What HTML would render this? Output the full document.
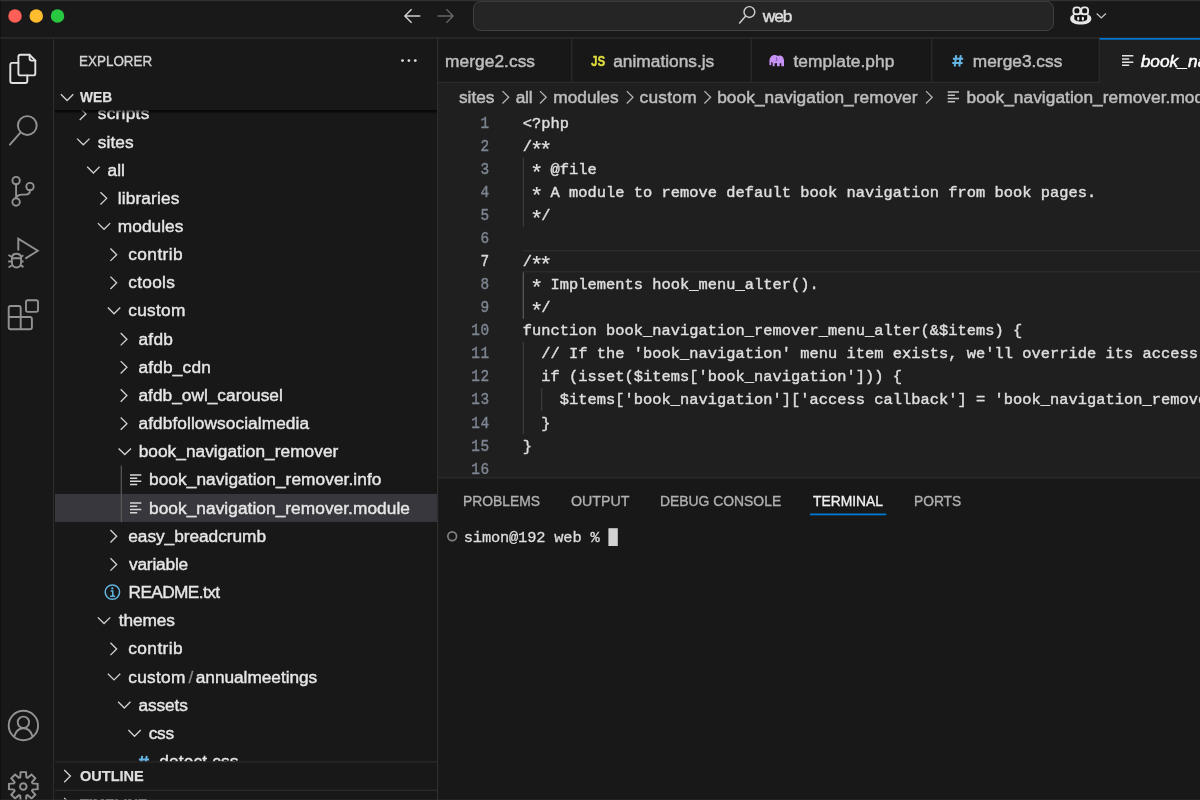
<!DOCTYPE html>
<html lang="en">
<head>
<meta charset="utf-8">
<title>book_navigation_remover.module — web</title>
<style>
*{box-sizing:border-box;margin:0;padding:0}
html,body{width:1200px;height:800px;overflow:hidden;background:#181818}
body{position:relative;font-family:"Liberation Sans",sans-serif;color:#cccccc;font-size:17px}
.abs{position:absolute}
#root{position:absolute;left:0;top:0;width:1200px;height:800px;will-change:transform;overflow:hidden}
#titlebar{left:0;top:0;width:1200px;height:38px;background:#191919}
#titleline{left:0;top:37.6px;width:1200px;height:1.5px;background:#2c2c2c}
#topedge{left:0;top:0;width:1200px;height:1.2px;background:#313131}
.tl{position:absolute;top:9.1px;width:13.8px;height:13.8px;border-radius:50%}
#cmd{left:472.6px;top:0.8px;width:581px;height:29.9px;border:1.3px solid #414141;border-radius:7.5px;background:#252525}
#cmdtext{font-size:17.3px;line-height:20px;height:20px;color:#dcdcdc;white-space:nowrap;-webkit-text-stroke:0.5px #dcdcdc}
#activity{left:0;top:38px;width:54px;height:762px;background:#181818}
#actline{left:53.4px;top:38px;width:1.1px;height:762px;background:#2b2b2b}
#sidebar-border{left:437px;top:38px;width:1.1px;height:762px;background:#2b2b2b}
#explorer-title{font-size:14.3px;color:#d4d4d4;line-height:18px;height:18px;white-space:nowrap;-webkit-text-stroke:0.35px #d4d4d4}
#treeclip{left:55px;top:83px;width:382px;height:679px;overflow:hidden}
#treeinner{position:absolute;left:-55px;top:-83px;width:437px;height:800px}
.sel{position:absolute;left:55px;width:382px;height:27.9px;background:#37373d}
.lbl{position:absolute;height:20px;line-height:20px;color:#e6e6e6;font-size:17.3px;white-space:nowrap;-webkit-text-stroke:0.42px #e6e6e6}
.lbl.sl{color:#8a8a8a;-webkit-text-stroke:0.3px #8a8a8a}
.hash{position:absolute;font-weight:bold;color:#519aba;font-size:17.5px;line-height:28.16px;height:28.16px}
.hdr{position:absolute;left:55px;width:382px;background:#181818}
.hdrt{position:absolute;font-weight:bold;font-size:15px;line-height:18px;height:18px;color:#dedede;white-space:nowrap;-webkit-text-stroke:0.25px #dedede}
.guide{position:absolute;width:1.1px;background:#3e3e3e}
#tabs{left:438px;top:38px;width:762px;height:44px;background:#181818}
#tabsline{left:438px;top:81.9px;width:661.5px;height:1.1px;background:#2b2b2b}
.tsep{position:absolute;top:38px;width:1.1px;height:44px;background:#2b2b2b}
#acttab{left:1099.5px;top:38px;width:101px;height:45px;background:#1f1f1f}
#acttabline{left:1099.5px;top:38px;width:101px;height:1.7px;background:#0078d4}
.tabt{position:absolute;top:51px;height:20px;line-height:20px;font-size:17.3px;color:#bcbcbc;white-space:nowrap;-webkit-text-stroke:0.5px #bcbcbc}
.tabt.on{color:#ffffff;font-style:italic;-webkit-text-stroke:0.5px #ffffff}
.crumb{position:absolute;top:87px;height:20px;line-height:20px;font-size:17.3px;color:#bdbdbd;white-space:nowrap;-webkit-text-stroke:0.5px #bdbdbd}
#editor{left:438px;top:82px;width:762px;height:396px;background:#1f1f1f}
.ln{position:absolute;left:438px;width:51.7px;text-align:right;font-family:"Liberation Mono",monospace;font-size:16px;letter-spacing:0.65px;line-height:18px;color:#7d8592;height:18px;-webkit-text-stroke:0.4px #7d8592;transform-origin:100% 50%;transform:scaleX(0.9)}
.ln.act{color:#d8d8d8;-webkit-text-stroke:0.4px #d8d8d8}
.cl{position:absolute;left:522.7px;font-family:"Liberation Mono",monospace;font-size:15.36px;letter-spacing:0.033px;line-height:18px;color:#dedede;white-space:pre;height:18px;-webkit-text-stroke:0.45px #dedede}
.a{display:inline-block;transform:translateY(4.5px) scale(1.45);-webkit-text-stroke:0.15px #dedede}
#curline{left:522.5px;top:250.1px;width:678px;height:22.3px;border-top:1.2px solid #2e2e2e;border-bottom:1.2px solid #2e2e2e}
#panel{left:438px;top:478px;width:762px;height:322px;background:#181818}
#panelline{left:438px;top:477.2px;width:762px;height:1.1px;background:#2d2d2d}
.ptab{position:absolute;font-size:14.3px;line-height:18px;height:18px;color:#b0b0b0;white-space:nowrap;-webkit-text-stroke:0.35px #b0b0b0}
.ptab.on{color:#f0f0f0;-webkit-text-stroke:0.35px #f0f0f0}
#term{left:463.8px;top:529px;font-family:"Liberation Mono",monospace;font-size:15.36px;letter-spacing:-0.166px;line-height:18px;height:18px;color:#dedede;white-space:pre;-webkit-text-stroke:0.3px #dedede}
</style>
</head>
<body><div id="root">
<!-- title bar -->
<div id="titlebar" class="abs"></div>
<svg class="abs" style="left:0;top:0" width="1200" height="38" viewBox="0 0 1200 38" fill="none">
  <circle cx="15" cy="15.9" r="6.75" fill="#fe5f57"/><circle cx="36.25" cy="15.9" r="6.75" fill="#febc2e"/><circle cx="57.5" cy="15.9" r="6.75" fill="#28c840"/>
  <path d="M420.3 16H405M411.6 9.3L404.9 16l6.700 6.700" stroke="#d0d0d0" stroke-width="1.45"/>
  <path d="M437.600 16H453M446.400 9.300L453.100 16l-6.700 6.700" stroke="#666666" stroke-width="1.350"/>
</svg>
<div id="cmd" class="abs"></div>
<svg class="abs" style="left:730px;top:0" width="40" height="32" viewBox="730 0 40 32" fill="none">
  <circle cx="749.4" cy="12" r="5.400" stroke="#cfcfcf" stroke-width="1.450"/>
  <path d="M745.700 16L739.200 23.400" stroke="#cfcfcf" stroke-width="1.450"/>
</svg>
<span id="cmdtext" class="abs" style="left:762.84px;top:6px;letter-spacing:-1.077px">web</span>
<svg class="abs" style="left:1066px;top:2px" width="46" height="28" viewBox="1066 2 46 28">
  <rect x="1070.1" y="13" width="21.3" height="11.4" rx="8.5" ry="5.7" fill="#e6e6e6"/>
  <path d="M1074.3 14.500h12.900v4c0 1.800-2.800 3-6.450 3s-6.450-1.200-6.450-3z" fill="#101010"/>
  <rect x="1077.200" y="16.700" width="2.100" height="3.900" rx="1" fill="#e6e6e6"/>
  <rect x="1081.800" y="16.700" width="2.100" height="3.900" rx="1" fill="#e6e6e6"/>
  <rect x="1073.400" y="7.400" width="6.900" height="6.900" rx="2.900" fill="#151515" stroke="#e6e6e6" stroke-width="1.900"/>
  <rect x="1081.200" y="7.400" width="6.900" height="6.900" rx="2.900" fill="#151515" stroke="#e6e6e6" stroke-width="1.900"/>
  <path d="M1096.700 13.500l4.600 4.500l4.600-4.500" fill="none" stroke="#c5c5c5" stroke-width="1.250"/>
</svg>

<!-- activity bar -->
<div id="activity" class="abs"></div>
<svg class="abs" style="left:0;top:38px" width="54" height="762" viewBox="0 38 54 762" fill="none" stroke-linejoin="round" stroke-linecap="round">
  <!-- explorer (active) -->
  <g stroke="#e2e2e2" stroke-width="1.9">
    <path d="M20.4 54.8H29.6L35.3 60.5V73.4a2 2 0 0 1-2 2H20.4a2 2 0 0 1-2-2V56.8a2 2 0 0 1 2-2z"/>
    <path d="M29.6 54.8V58.6a2 2 0 0 0 2 2H35.3"/>
    <path d="M18.4 62.9H12.300a2 2 0 0 0-2 2V81a2 2 0 0 0 2 2H25.300a2 2 0 0 0 2-2V75.400"/>
  </g>
  <!-- search -->
  <g stroke="#929292" stroke-width="1.95">
    <circle cx="27.300" cy="125.500" r="9.400"/>
    <path d="M20.400 132.600L9.900 144.600"/>
  </g>
  <!-- source control -->
  <g stroke="#929292" stroke-width="1.9">
    <circle cx="16.100" cy="180.600" r="3.700"/>
    <circle cx="30" cy="186.600" r="3.700"/>
    <circle cx="16.100" cy="202" r="3.700"/>
    <path d="M16.100 184.300V198.300M30 190.300c0 2.800-1.800 4.300-4.600 4.300h-3.300c-3 0-6 1.500-6 3.700"/>
  </g>
  <!-- debug -->
  <g stroke="#929292" stroke-width="1.9" stroke-linecap="butt" stroke-linejoin="miter">
    <path d="M18.300 250.500V238.700L37.800 250.700L25.300 258.600"/>
    <path d="M11.9 258.3c0-3 1.900-4.500 4.600-4.500s4.600 1.500 4.600 4.500v4c0 3-1.900 5.200-4.600 5.200s-4.600-2.200-4.600-5.200zM12 258.200h9M12 257l-3.600-2M21 257l2.300-1.700M12 261.500H8.200M21 261.500h2.600M12.300 265l-3.700 2.500M20.700 265l2.700 2.300"/>
  </g>
  <!-- extensions -->
  <g stroke="#929292" stroke-width="1.9">
    <rect x="26" y="300.200" width="12" height="11.700" rx="1.800"/>
    <path d="M10.700 306h8a2 2 0 0 1 2 2v9h9.200a2 2 0 0 1 2 2v8.300a2 2 0 0 1-2 2H10.700a2 2 0 0 1-2-2V308a2 2 0 0 1 2-2zM8.700 317h12M20.700 317v12.300"/>
  </g>
  <!-- account -->
  <g stroke="#929292" stroke-width="1.9">
    <circle cx="23.400" cy="725.500" r="14.700"/>
    <circle cx="23.400" cy="722.300" r="5.700"/>
    <path d="M14.200 736.500c1.500-5.200 5-8.200 9.200-8.200s7.700 3 9.200 8.200"/>
  </g>
  <!-- gear -->
  <g stroke="#929292" stroke-width="1.95" transform="translate(23.300,786.500)" stroke-linejoin="miter">
    <circle cx="0" cy="0" r="3.3"/>
    <polygon points="-3.08,-9.20 -2.66,-14.36 2.66,-14.36 3.08,-9.20 4.33,-8.68 8.27,-12.03 12.03,-8.27 8.68,-4.33 9.20,-3.08 14.36,-2.66 14.36,2.66 9.20,3.08 8.68,4.33 12.03,8.27 8.27,12.03 4.33,8.68 3.08,9.20 2.66,14.36 -2.66,14.36 -3.08,9.20 -4.33,8.68 -8.27,12.03 -12.03,8.27 -8.68,4.33 -9.20,3.08 -14.36,2.66 -14.36,-2.66 -9.20,-3.08 -8.68,-4.33 -12.03,-8.27 -8.27,-12.03 -4.33,-8.68"/>
  </g>
</svg>

<!-- sidebar -->
<span id="explorer-title" class="abs" style="left:79.39px;transform-origin:0 50%;transform:scaleX(0.9403);top:52px">EXPLORER</span>
<svg class="abs" style="left:398px;top:52px" width="22" height="18" viewBox="398 52 22 18"><circle cx="402.5" cy="60.6" r="1.4" fill="#dcdcdc"/><circle cx="408.900" cy="60.600" r="1.400" fill="#dcdcdc"/><circle cx="415.300" cy="60.600" r="1.400" fill="#dcdcdc"/></svg>
<div id="treeclip" class="abs"><div id="treeinner">
<span class="lbl" style="left:97.77px;top:103px;letter-spacing:0.264px">scripts</span>
<span class="lbl" style="left:97.77px;top:132px;letter-spacing:0.070px">sites</span>
<span class="lbl" style="left:107.61px;top:160px;letter-spacing:0.002px">all</span>
<span class="lbl" style="left:117.83px;top:188px;letter-spacing:0.122px">libraries</span>
<span class="lbl" style="left:117.83px;top:216px;letter-spacing:0.022px">modules</span>
<span class="lbl" style="left:128.26px;top:244px;letter-spacing:0.421px">contrib</span>
<span class="lbl" style="left:128.26px;top:272px;letter-spacing:0.279px">ctools</span>
<span class="lbl" style="left:128.26px;top:300px;letter-spacing:0.272px">custom</span>
<span class="lbl" style="left:138.51px;top:329px;letter-spacing:0.260px">afdb</span>
<span class="lbl" style="left:138.51px;top:357px;letter-spacing:0.167px">afdb_cdn</span>
<span class="lbl" style="left:138.51px;top:385px;letter-spacing:0.008px">afdb_owl_carousel</span>
<span class="lbl" style="left:138.51px;top:413px;letter-spacing:0.073px">afdbfollowsocialmedia</span>
<span class="lbl" style="left:138.63px;top:441px;letter-spacing:0.037px">book_navigation_remover</span>
<span class="lbl" style="left:149.03px;top:469px;letter-spacing:0.068px">book_navigation_remover.info</span>
<svg class="abs" style="left:0;top:0" width="437" height="800" viewBox="0 0 437 800"><rect x="54.6" y="493.94" width="383" height="28" fill="#37373d"/><rect x="120.7" y="465.6" width="1.2" height="56.6" fill="#5a5a5a"/></svg>
<span class="lbl" style="left:149.03px;top:498px;letter-spacing:0.051px">book_navigation_remover.module</span>
<span class="lbl" style="left:128.26px;top:526px;letter-spacing:-0.037px">easy_breadcrumb</span>
<span class="lbl" style="left:128.96px;top:554px;letter-spacing:-0.182px">variable</span>
<span class="lbl" style="left:128.52px;top:582px;letter-spacing:-0.610px">README.txt</span>
<span class="lbl" style="left:118.74px;top:610px;letter-spacing:-0.126px">themes</span>
<span class="lbl" style="left:128.26px;top:638px;letter-spacing:0.421px">contrib</span>
<span class="lbl" style="left:128.26px;top:667px;letter-spacing:0.272px">custom</span>
<span class="lbl sl" style="left:188.4px;top:667px">/</span>
<span class="lbl" style="left:195.76px;top:667px;letter-spacing:-0.042px">annualmeetings</span>
<span class="lbl" style="left:138.51px;top:695px;letter-spacing:-0.131px">assets</span>
<span class="lbl" style="left:148.76px;top:723px;letter-spacing:-0.305px">css</span>
<span class="lbl" style="left:159.26px;top:751px;letter-spacing:0.161px">detect.css</span>
<svg class="abs" style="left:0;top:0" width="437" height="800" viewBox="0 0 437 800"><path d="M79.70 107.68L85.90 113.88L79.70 120.08" stroke="#d0d0d0" stroke-width="1.35" fill="none"/><path d="M77.10 138.64L83.30 144.84L89.50 138.64" stroke="#d0d0d0" stroke-width="1.35" fill="none"/><path d="M87.20 166.80L93.40 173.00L99.60 166.80" stroke="#d0d0d0" stroke-width="1.35" fill="none"/><path d="M100.45 192.16L106.65 198.36L100.45 204.56" stroke="#d0d0d0" stroke-width="1.35" fill="none"/><path d="M97.85 223.12L104.05 229.32L110.25 223.12" stroke="#d0d0d0" stroke-width="1.35" fill="none"/><path d="M110.45 248.48L116.65 254.68L110.45 260.88" stroke="#d0d0d0" stroke-width="1.35" fill="none"/><path d="M110.45 276.64L116.65 282.84L110.45 289.04" stroke="#d0d0d0" stroke-width="1.35" fill="none"/><path d="M107.85 307.60L114.05 313.80L120.25 307.60" stroke="#d0d0d0" stroke-width="1.35" fill="none"/><path d="M120.70 332.96L126.90 339.16L120.70 345.36" stroke="#d0d0d0" stroke-width="1.35" fill="none"/><path d="M120.70 361.12L126.90 367.32L120.70 373.52" stroke="#d0d0d0" stroke-width="1.35" fill="none"/><path d="M120.70 389.28L126.90 395.48L120.70 401.68" stroke="#d0d0d0" stroke-width="1.35" fill="none"/><path d="M120.70 417.44L126.90 423.64L120.70 429.84" stroke="#d0d0d0" stroke-width="1.35" fill="none"/><path d="M118.60 448.40L124.80 454.60L131.00 448.40" stroke="#d0d0d0" stroke-width="1.35" fill="none"/><path d="M130.00 474.93h11.30M130.00 478.13h7.20M130.00 481.33h11.30M130.00 484.53h7.20" stroke="#d4d7d6" stroke-width="1.50" fill="none"/><path d="M130.00 503.09h11.30M130.00 506.29h7.20M130.00 509.49h11.30M130.00 512.69h7.20" stroke="#d4d7d6" stroke-width="1.50" fill="none"/><path d="M110.45 530.08L116.65 536.28L110.45 542.48" stroke="#d0d0d0" stroke-width="1.35" fill="none"/><path d="M110.45 558.24L116.65 564.44L110.45 570.64" stroke="#d0d0d0" stroke-width="1.35" fill="none"/><circle cx="112.4" cy="592.10" r="7.2" fill="none" stroke="#62b4e0" stroke-width="1.5"/><path d="M110.60000000000001 591.00h2.2v5.2M110.10000000000001 596.30h5" fill="none" stroke="#62b4e0" stroke-width="1.5"/><circle cx="112.30000000000001" cy="588.40" r="1.15" fill="#62b4e0"/><path d="M97.85 617.36L104.05 623.56L110.25 617.36" stroke="#d0d0d0" stroke-width="1.35" fill="none"/><path d="M110.45 642.72L116.65 648.92L110.45 655.12" stroke="#d0d0d0" stroke-width="1.35" fill="none"/><path d="M107.85 673.68L114.05 679.88L120.25 673.68" stroke="#d0d0d0" stroke-width="1.35" fill="none"/><path d="M118.10 701.84L124.30 708.04L130.50 701.84" stroke="#d0d0d0" stroke-width="1.35" fill="none"/><path d="M128.35 730.00L134.55 736.20L140.75 730.00" stroke="#d0d0d0" stroke-width="1.35" fill="none"/><path d="M142.20 755.78l-1.5 11.6M146.70 755.78l-1.5 11.6M138.90 759.38h10.2M138.30 763.78h10.2" stroke="#64b5e4" stroke-width="2" fill="none"/></svg>
</div></div>
<div class="hdr" style="top:83px;height:27.2px"></div>
<div class="abs" style="left:55px;top:110.2px;width:382px;height:3.6px;background:linear-gradient(rgba(0,0,0,.8),rgba(0,0,0,.35) 60%,rgba(0,0,0,0))"></div>
<div class="hdr" style="top:762px;height:38px"></div>
<svg class="abs" style="left:55px;top:83px" width="40" height="717" viewBox="55 83 40 717" fill="none" stroke="#d0d0d0" stroke-width="1.35">
  <path d="M60.900 94.300l6.200 6.200l6.200-6.200"/>
  <path d="M64.2 769.9l6.200 6.200l-6.200 6.200"/>
  <path d="M64.2 798.100l6.200 6.200l-6.200 6.200"/>
</svg>
<span class="hdrt" style="left:80.40px;transform-origin:0 50%;transform:scaleX(0.9180);top:88px">WEB</span>
<span class="hdrt" style="left:79.82px;transform-origin:0 50%;transform:scaleX(0.9683);top:767px">OUTLINE</span>
<span class="hdrt" style="left:80.26px;transform-origin:0 50%;transform:scaleX(0.9644);top:795px">TIMELINE</span>

<!-- editor -->
<div id="editor" class="abs"></div>
<div id="tabs" class="abs"></div>
<div id="acttab" class="abs"></div>
<span class="abs" style="left:590.8px;top:52px;color:#e2de3d;font-weight:bold;font-size:14.4px;line-height:18px;height:18px;transform-origin:0 50%;transform:scaleX(0.81);-webkit-text-stroke:0.3px #e2de3d">JS</span>
<svg class="abs" style="left:766px;top:52px" width="22" height="18" viewBox="766 52 22 18">
  <path d="M769.4 61.300c0-3.700 2.300-6.300 5.200-6.300c1.300 0 2.300 .400 3 1c.500-.300 1.200-.500 2-.500c2.600 0 4.400 2.200 4.400 5.300v5.400h-2.700v-3h-1.600v3h-2.700v-3.200c-.8 .3-1.600 .4-2.400 .3v2.900h-1.900v-3.500c-.6-.2-1-.5-1.400-.9v2.600c0 .6-.3 .9-.9 .9s-1-.4-1-1z" fill="#c792f5"/>
  <path d="M776.300 57.300c.9 1.400 .7 3.200-.5 4.100" fill="none" stroke="#6a4a92" stroke-width=".9"/>
</svg>
<svg class="abs" style="left:950px;top:52px" width="16" height="18" viewBox="950 52 16 18"><path d="M956.200 55.100l-1.500 11.400M960.800 55.100l-1.500 11.400M952.900 58.700h10.300M952.300 63.100h10.300" stroke="#64b5e4" stroke-width="2" fill="none"/></svg>
<svg class="abs" style="left:1120px;top:52px" width="16" height="16" viewBox="1120 52 16 16"><path d="M1122 55.750h11.300M1122 58.950h7.200M1122 62.150h11.300M1122 65.350h7.200" stroke="#e4e4e4" stroke-width="1.500" fill="none"/></svg>
<span class="tabt" style="left:445.08px;letter-spacing:0.064px">merge2.css</span>
<span class="tabt" style="left:613.26px;letter-spacing:0.012px">animations.js</span>
<span class="tabt" style="left:793.49px;letter-spacing:0.087px">template.php</span>
<span class="tabt" style="left:972.83px;letter-spacing:0.014px">merge3.css</span>
<span class="tabt on" style="left:1140.64px;letter-spacing:0.051px">book_navigation_remover.module</span>
<span class="crumb" style="left:459.02px;letter-spacing:-0.055px">sites</span>
<span class="crumb" style="left:515.76px;letter-spacing:-0.273px">all</span>
<span class="crumb" style="left:553.33px;letter-spacing:-0.020px">modules</span>
<span class="crumb" style="left:639.51px;letter-spacing:0.272px">custom</span>
<span class="crumb" style="left:717.13px;letter-spacing:0.071px">book_navigation_remover</span>
<span class="crumb" style="left:966.48px;letter-spacing:0.051px">book_navigation_remover.module</span>
<svg class="abs" style="left:0;top:0" width="1200" height="120" viewBox="0 0 1200 120"><path d="M502.50 91.10L508.70 97.30L502.50 103.50" stroke="#b4b4b4" stroke-width="1.3" fill="none"/><path d="M540.00 91.10L546.20 97.30L540.00 103.50" stroke="#b4b4b4" stroke-width="1.3" fill="none"/><path d="M626.80 91.10L633.00 97.30L626.80 103.50" stroke="#b4b4b4" stroke-width="1.3" fill="none"/><path d="M704.40 91.10L710.60 97.30L704.40 103.50" stroke="#b4b4b4" stroke-width="1.3" fill="none"/><path d="M926.00 91.10L932.20 97.30L926.00 103.50" stroke="#b4b4b4" stroke-width="1.3" fill="none"/><path d="M947.70 92.05h11.30M947.70 95.25h7.20M947.70 98.45h11.30M947.70 101.65h7.20" stroke="#c5c5c5" stroke-width="1.50" fill="none"/></svg>
<div class="ln" style="top:115px">1</div><div class="cl" style="top:115px">&lt;?php</div>
<div class="ln" style="top:138px">2</div><div class="cl" style="top:138px">/<span class="a">*</span><span class="a">*</span></div>
<div class="ln" style="top:161px">3</div><div class="cl" style="top:161px"> <span class="a">*</span> @file</div>
<div class="ln" style="top:184px">4</div><div class="cl" style="top:184px"> <span class="a">*</span> A module to remove default book navigation from book pages.</div>
<div class="ln" style="top:207px">5</div><div class="cl" style="top:207px"> <span class="a">*</span>/</div>
<div class="ln" style="top:230px">6</div><div class="cl" style="top:230px"></div>
<div class="ln act" style="top:253px">7</div><div class="cl" style="top:253px">/<span class="a">*</span><span class="a">*</span></div>
<div class="ln" style="top:276px">8</div><div class="cl" style="top:276px"> <span class="a">*</span> Implements hook_menu_alter().</div>
<div class="ln" style="top:299px">9</div><div class="cl" style="top:299px"> <span class="a">*</span>/</div>
<div class="ln" style="top:322px">10</div><div class="cl" style="top:322px">function book_navigation_remover_menu_alter(&amp;$items) {</div>
<div class="ln" style="top:345px">11</div><div class="cl" style="top:345px">  // If the 'book_navigation' menu item exists, we'll override its access callback.</div>
<div class="ln" style="top:368px">12</div><div class="cl" style="top:368px">  if (isset($items['book_navigation'])) {</div>
<div class="ln" style="top:391px">13</div><div class="cl" style="top:391px">    $items['book_navigation']['access callback'] = 'book_navigation_remover_access';</div>
<div class="ln" style="top:415px">14</div><div class="cl" style="top:415px">  }</div>
<div class="ln" style="top:438px">15</div><div class="cl" style="top:438px">}</div>
<div class="ln" style="top:461px">16</div><div class="cl" style="top:461px"></div>

<!-- panel -->
<div id="panel" class="abs"></div>
<svg class="abs" style="left:0;top:0" width="1200" height="800" viewBox="0 0 1200 800" shape-rendering="geometricPrecision">
  <rect x="0" y="0" width="1200" height="1.2" fill="#313131"/>
  <rect x="0" y="1.2" width="0.7" height="799" fill="#0e0e0e"/>
  <rect x="0" y="37.2" width="1200" height="1.5" fill="#2c2c2c"/>
  <rect x="52.85" y="38.5" width="1.25" height="762" fill="#2b2b2b"/>
  <rect x="437" y="38.5" width="1.25" height="762" fill="#2e2e2e"/>
  <rect x="55" y="761.2" width="382" height="1.25" fill="#2b2b2b"/>
  <rect x="55" y="789.7" width="382" height="1.25" fill="#2b2b2b"/>
  <rect x="438" y="81.8" width="661.5" height="1.25" fill="#2b2b2b"/>
  <rect x="571.1" y="39" width="1.25" height="43" fill="#2b2b2b"/>
  <rect x="750.6" y="39" width="1.25" height="43" fill="#2b2b2b"/>
  <rect x="931.1" y="39" width="1.25" height="43" fill="#2b2b2b"/>
  <rect x="1098.6" y="39" width="1.25" height="43" fill="#2b2b2b"/>
  <rect x="1099.6" y="38" width="101" height="1.7" fill="#0078d4"/>
  <rect x="522.6" y="250.2" width="678" height="1.2" fill="#2e2e2e"/>
  <rect x="522.6" y="271.2" width="678" height="1.2" fill="#2e2e2e"/>
  <rect x="522.7" y="157.6" width="1.2" height="69.1" fill="#3e3e3e"/>
  <rect x="522.7" y="272.4" width="1.2" height="46.5" fill="#5c5c5c"/>
  <rect x="522.7" y="342" width="1.2" height="92.2" fill="#3e3e3e"/>
  <rect x="541.1" y="388.1" width="1.2" height="23" fill="#3e3e3e"/>
  <rect x="438.2" y="477.2" width="762" height="1.25" fill="#2d2d2d"/>
  <rect x="810" y="513.5" width="76.3" height="1.8" fill="#0078d4"/>
  <rect x="0" y="799.4" width="1200" height="0.6" fill="#2a2a2a"/>
  <rect x="608.4" y="528.2" width="9.4" height="17.8" fill="#d2d2d2"/>
</svg>
<span class="ptab" style="left:463.01px;transform-origin:0 50%;transform:scaleX(0.9685);top:492px">PROBLEMS</span>
<span class="ptab" style="left:570.72px;transform-origin:0 50%;transform:scaleX(0.9944);top:492px">OUTPUT</span>
<span class="ptab" style="left:660.25px;transform-origin:0 50%;transform:scaleX(0.9713);top:492px">DEBUG CONSOLE</span>
<span class="ptab on" style="left:813.34px;transform-origin:0 50%;transform:scaleX(0.9678);top:492px">TERMINAL</span>
<span class="ptab" style="left:914.26px;transform-origin:0 50%;transform:scaleX(0.9631);top:492px">PORTS</span>
<svg class="abs" style="left:444px;top:528px" width="16" height="16" viewBox="444 528 16 16"><circle cx="452.2" cy="536.3" r="4.35" fill="none" stroke="#808080" stroke-width="1.7"/></svg>
<div id="term" class="abs">simon@192 web % </div>

</div></body>
</html>
